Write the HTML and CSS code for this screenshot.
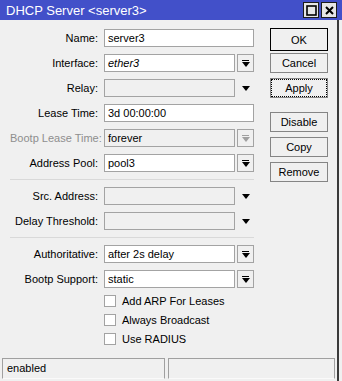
FILE: index.html
```html
<!DOCTYPE html>
<html lang="en">
<head>
    <meta charset="UTF-8">
    <title>DHCP Server &lt;server3&gt;</title>
    <link rel="stylesheet" href="styles.css">
</head>
<body>
    <div class="window">
        <div class="titlebar">
            <span class="title">DHCP Server &lt;server3&gt;</span>
            <div class="title-buttons">
                <span class="tbtn"><svg width="11" height="11" viewBox="0 0 11 11"><rect x="1" y="1" width="9" height="9" fill="none" stroke="#000" stroke-width="1.6"/></svg></span>
                <span class="tbtn"><svg width="11" height="11" viewBox="0 0 11 11"><path d="M2 2 L9 9 M9 2 L2 9" stroke="#000" stroke-width="2"/></svg></span>
            </div>
        </div>

        <div class="content">
            <div class="body">
                <div class="form">
                    <div class="row">
                        <label>Name:</label>
                        <div class="field">server3</div>
                    </div>
                    <div class="row">
                        <label>Interface:</label>
                        <div class="field short italic">ether3</div>
                        <span class="drop"><span class="bar"></span><span class="tri"></span></span>
                    </div>
                    <div class="row">
                        <label>Relay:</label>
                        <div class="field short off"></div>
                        <span class="drop flat"><span class="tri"></span></span>
                    </div>
                    <div class="row">
                        <label>Lease Time:</label>
                        <div class="field">3d 00:00:00</div>
                    </div>
                    <div class="row">
                        <label class="grey">Bootp Lease Time:</label>
                        <div class="field short off">forever</div>
                        <span class="drop dim"><span class="bar"></span><span class="tri"></span></span>
                    </div>
                    <div class="row">
                        <label>Address Pool:</label>
                        <div class="field short">pool3</div>
                        <span class="drop"><span class="bar"></span><span class="tri"></span></span>
                    </div>

                    <div class="sep"></div>

                    <div class="row">
                        <label>Src. Address:</label>
                        <div class="field short off"></div>
                        <span class="drop flat"><span class="tri"></span></span>
                    </div>
                    <div class="row">
                        <label>Delay Threshold:</label>
                        <div class="field short off"></div>
                        <span class="drop flat"><span class="tri"></span></span>
                    </div>

                    <div class="sep"></div>

                    <div class="row">
                        <label>Authoritative:</label>
                        <div class="field short">after 2s delay</div>
                        <span class="drop"><span class="bar"></span><span class="tri"></span></span>
                    </div>
                    <div class="row">
                        <label>Bootp Support:</label>
                        <div class="field short">static</div>
                        <span class="drop"><span class="bar"></span><span class="tri"></span></span>
                    </div>

                    <div class="checks">
                        <div class="check"><span class="box"></span>Add ARP For Leases</div>
                        <div class="check"><span class="box"></span>Always Broadcast</div>
                        <div class="check"><span class="box"></span>Use RADIUS</div>
                    </div>
                </div>

                <div class="buttons">
                    <button class="btn default">OK</button>
                    <button class="btn">Cancel</button>
                    <button class="btn focus"><span>Apply</span></button>
                    <button class="btn gap">Disable</button>
                    <button class="btn">Copy</button>
                    <button class="btn">Remove</button>
                </div>
            </div>

            <div class="statusbar">
                <div class="panel left">enabled</div>
                <div class="panel right"></div>
            </div>
        </div>
    </div>
</body>
</html>
```

FILE: styles.css
```css
body {
    margin: 0;
    padding: 0;
    background-color: #f0f0f0;
    font-family: "Liberation Sans", Arial, sans-serif;
    font-size: 11px;
    color: #000;
}

.window {
    width: 342px;
    height: 381px;
    display: flex;
    flex-direction: column;
    overflow: hidden;
}

/* barra de titulo */
.titlebar {
    height: 20px;
    flex: none;
    background-color: #4250c9;
    color: #fff;
    display: flex;
    align-items: center;
    justify-content: space-between;
    padding: 0 5px 0 6px;
}

.title {
    font-size: 13px;
}

.title-buttons {
    display: flex;
    gap: 2px;
}

.tbtn {
    width: 14px;
    height: 14px;
    background-color: #e6e6e6;
    border: 1px solid #1c1c1c;
    display: flex;
    align-items: center;
    justify-content: center;
}

.content {
    flex: 1;
    display: flex;
    flex-direction: column;
    border-right: 2px solid #3a3a3a;
    margin-right: 3px;
}

.body {
    flex: 1;
    display: flex;
    padding-top: 9px;
}

.form {
    width: 254px;
    padding-left: 10px;
    box-sizing: border-box;
}

.row {
    display: flex;
    align-items: center;
    height: 18px;
    margin-bottom: 7px;
}

.row label {
    width: 88px;
    text-align: right;
    margin-right: 6px;
    white-space: nowrap;
}

.grey {
    color: #8e8e8e;
}

.field {
    width: 150px;
    height: 18px;
    box-sizing: border-box;
    background-color: #fff;
    border: 1px solid #a3a3a3;
    padding: 0 3px;
    line-height: 16px;
    white-space: nowrap;
    overflow: hidden;
}

.field.short {
    width: 131px;
    margin-right: 2px;
}

.field.off {
    background-color: #f0f0f0;
}

.italic {
    font-style: italic;
}

.drop {
    width: 17px;
    height: 18px;
    box-sizing: border-box;
    border: 1px solid #a3a3a3;
    background-color: #f0f0f0;
    display: flex;
    flex-direction: column;
    align-items: center;
    justify-content: center;
}

.drop.flat {
    border-color: transparent;
}

.bar {
    width: 7px;
    height: 1px;
    background-color: #000;
    margin-bottom: 1px;
}

.tri {
    width: 0;
    height: 0;
    border-left: 4px solid transparent;
    border-right: 4px solid transparent;
    border-top: 5px solid #000;
}

.drop.dim .bar {
    background-color: #a0a0a0;
}

.drop.dim .tri {
    border-top-color: #a0a0a0;
}

.sep {
    height: 1px;
    background-color: #d9d9d9;
    margin: 3px 0 7px 0;
}

.checks {
    padding-left: 94px;
}

.check {
    display: flex;
    align-items: center;
    height: 12px;
    margin-bottom: 7px;
    white-space: nowrap;
}

.box {
    width: 12px;
    height: 12px;
    box-sizing: border-box;
    border: 1px solid #a3a3a3;
    background-color: #fff;
    margin-right: 6px;
}

/* botoes da direita */
.buttons {
    display: flex;
    flex-direction: column;
    gap: 5px;
    margin-left: 16px;
    margin-top: -1px;
}

.btn {
    width: 58px;
    height: 20px;
    box-sizing: border-box;
    background-color: #f0f0f0;
    border: 1px solid #858585;
    font-family: "Liberation Sans", Arial, sans-serif;
    font-size: 11px;
    color: #000;
    padding: 0;
}

.btn.default {
    height: 23px;
    border: 1px solid #000;
    margin-bottom: -3px;
}

.btn.focus span {
    display: block;
    margin: 1px;
    height: 16px;
    line-height: 16px;
    outline: 1px dotted #000;
}

.btn.gap {
    margin-top: 9px;
}

.statusbar {
    flex: none;
    height: 23px;
    display: flex;
    gap: 3px;
    padding: 0 2px;
}

.panel {
    height: 21px;
    box-sizing: border-box;
    border: 1px solid #a0a0a0;
    border-bottom-color: #fafafa;
    padding-left: 4px;
    line-height: 19px;
}

.panel.left {
    width: 163px;
}

.panel.right {
    flex: 1;
}
```
